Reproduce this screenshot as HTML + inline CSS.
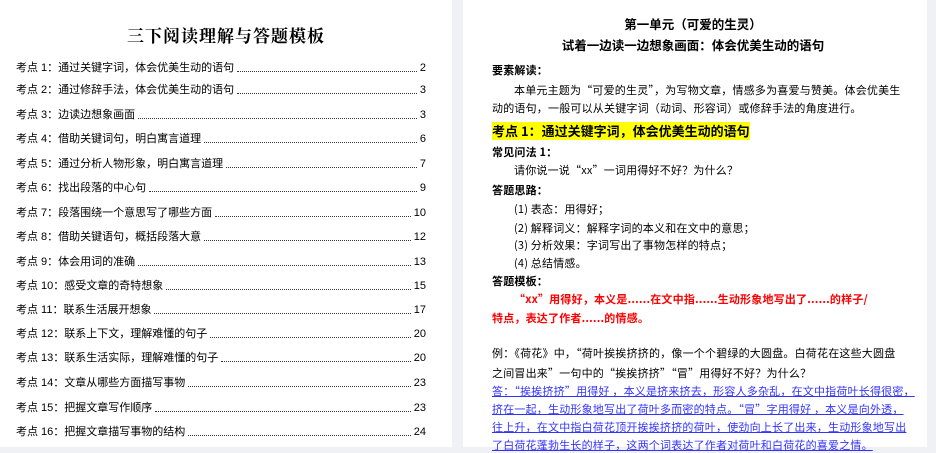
<!DOCTYPE html>
<html><head><meta charset="utf-8"><style>
*{margin:0;padding:0;box-sizing:border-box}
body{width:936px;height:447px;overflow:hidden;background:#f0f1f5;font-family:"Liberation Sans","Noto Sans CJK SC",sans-serif;color:#000;position:relative}
.pg{position:absolute;top:0;height:447px;background:#fff}
.t{position:absolute;white-space:nowrap;line-height:1}
.toc{position:absolute;left:16px;width:410px;font-size:11px;display:flex;line-height:14px}
.toc .d{flex:1;border-bottom:1.5px dotted #333;margin:0 3px 3px 3px}
.rp{font-family:"Noto Sans CJK SC",sans-serif}
.r{font-size:11px;letter-spacing:0.2px}
.b{font-weight:bold}
</style></head><body>
<div class="pg" style="left:0;width:452px">
<div class="t" style="left:0;width:452px;text-align:center;top:26px;font-size:17px;font-weight:bold;font-family:'Noto Serif CJK SC',serif;letter-spacing:1px">三下阅读理解与答题模板</div>
<div class="toc" style="top:61px"><span>考点 1：通过关键字词，体会优美生动的语句</span><span class="d"></span><span>2</span></div>
<div class="toc" style="top:83px"><span>考点 2：通过修辞手法，体会优美生动的语句</span><span class="d"></span><span>3</span></div>
<div class="toc" style="top:108px"><span>考点 3：边读边想象画面</span><span class="d"></span><span>3</span></div>
<div class="toc" style="top:132px"><span>考点 4：借助关键词句，明白寓言道理</span><span class="d"></span><span>6</span></div>
<div class="toc" style="top:157px"><span>考点 5：通过分析人物形象，明白寓言道理</span><span class="d"></span><span>7</span></div>
<div class="toc" style="top:181px"><span>考点 6：找出段落的中心句</span><span class="d"></span><span>9</span></div>
<div class="toc" style="top:206px"><span>考点 7：段落围绕一个意思写了哪些方面</span><span class="d"></span><span>10</span></div>
<div class="toc" style="top:230px"><span>考点 8：借助关键语句，概括段落大意</span><span class="d"></span><span>12</span></div>
<div class="toc" style="top:255px"><span>考点 9：体会用词的准确</span><span class="d"></span><span>13</span></div>
<div class="toc" style="top:279px"><span>考点 10：感受文章的奇特想象</span><span class="d"></span><span>15</span></div>
<div class="toc" style="top:303px"><span>考点 11：联系生活展开想象</span><span class="d"></span><span>17</span></div>
<div class="toc" style="top:327px"><span>考点 12：联系上下文，理解难懂的句子</span><span class="d"></span><span>20</span></div>
<div class="toc" style="top:351px"><span>考点 13：联系生活实际，理解难懂的句子</span><span class="d"></span><span>20</span></div>
<div class="toc" style="top:376px"><span>考点 14：文章从哪些方面描写事物</span><span class="d"></span><span>23</span></div>
<div class="toc" style="top:401px"><span>考点 15：把握文章写作顺序</span><span class="d"></span><span>23</span></div>
<div class="toc" style="top:425px"><span>考点 16：把握文章描写事物的结构</span><span class="d"></span><span>24</span></div>
</div>
<div class="pg rp" style="left:463px;width:464px">
<div class="t b" style="left:0;width:460px;text-align:center;top:18px;font-size:12.5px">第一单元（可爱的生灵）</div>
<div class="t b" style="left:0;width:460px;text-align:center;top:39px;font-size:12.5px">试着一边读一边想象画面：体会优美生动的语句</div>
<div class="t r b" style="left:29px;top:65px">要素解读：</div>
<div class="t r" style="left:51px;top:85px">本单元主题为“可爱的生灵”，为写物文章，情感多为喜爱与赞美。体会优美生</div>
<div class="t r" style="left:29px;top:103px">动的语句，一般可以从关键字词（动词、形容词）或修辞手法的角度进行。</div>
<div class="t b" style="left:29px;top:122px;font-size:13px;background:#ff0;padding:2px 0 3px">考点 1：通过关键字词，体会优美生动的语句</div>
<div class="t r b" style="left:29px;top:147px">常见问法 1：</div>
<div class="t r" style="left:51px;top:165px">请你说一说“xx”一词用得好不好？为什么？</div>
<div class="t r b" style="left:29px;top:185px">答题思路：</div>
<div class="t r" style="left:51px;top:204px">(1) 表态：用得好；</div>
<div class="t r" style="left:51px;top:223px">(2) 解释词义：解释字词的本义和在文中的意思；</div>
<div class="t r" style="left:51px;top:240px">(3) 分析效果：字词写出了事物怎样的特点；</div>
<div class="t r" style="left:51px;top:258px">(4) 总结情感。</div>
<div class="t r b" style="left:29px;top:276px">答题模板：</div>
<div class="t r b" style="left:51px;top:294px;color:#f00">“xx”用得好，本义是......在文中指......生动形象地写出了......的样子/</div>
<div class="t r b" style="left:29px;top:313px;color:#f00">特点，表达了作者......的情感。</div>
<div class="t r" style="left:29px;top:348px">例：《荷花》中，“荷叶挨挨挤挤的，像一个个碧绿的大圆盘。白荷花在这些大圆盘</div>
<div class="t r" style="left:29px;top:368px">之间冒出来”一句中的“挨挨挤挤”“冒”用得好不好？为什么？</div>
<div class="t r" style="left:29px;top:386px;color:#3333ff;text-decoration:underline">答：“挨挨挤挤”用得好 ，本义是挤来挤去，形容人多杂乱，在文中指荷叶长得很密，</div>
<div class="t r" style="left:29px;top:404px;color:#3333ff;text-decoration:underline">挤在一起，生动形象地写出了荷叶多而密的特点。“冒”字用得好 ，本义是向外透，</div>
<div class="t r" style="left:29px;top:422px;color:#3333ff;text-decoration:underline">往上升，在文中指白荷花顶开挨挨挤挤的荷叶，使劲向上长了出来，生动形象地写出</div>
<div class="t r" style="left:29px;top:440px;color:#3333ff;text-decoration:underline">了白荷花蓬勃生长的样子，这两个词表达了作者对荷叶和白荷花的喜爱之情。</div>
</div>
</body></html>
